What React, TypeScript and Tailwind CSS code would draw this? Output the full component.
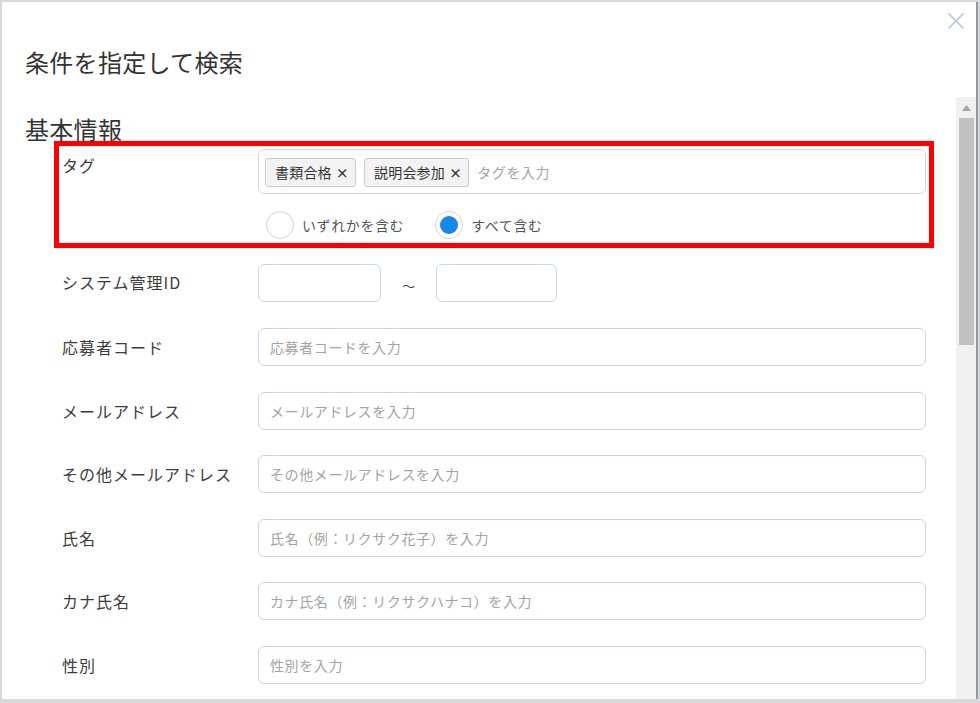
import { useState } from 'react';

type Field = { label: string; placeholder: string };

const fields: Field[] = [
  { label: '応募者コード', placeholder: '応募者コードを入力' },
  { label: 'メールアドレス', placeholder: 'メールアドレスを入力' },
  { label: 'その他メールアドレス', placeholder: 'その他メールアドレスを入力' },
  { label: '氏名', placeholder: '氏名（例：リクサク花子）を入力' },
  { label: 'カナ氏名', placeholder: 'カナ氏名（例：リクサクハナコ）を入力' },
  { label: '性別', placeholder: '性別を入力' },
];

const inputCls =
  'h-[38px] rounded-[6px] border border-[#c9d7e5] bg-white px-[11px] text-[14px] tracking-[0.6px] text-[#333] outline-none placeholder:text-[#a3a3a3]';

const labelCls = 'w-[196px] shrink-0 text-[16px] tracking-[1px] text-[#3c3c3c]';

function Radio({ checked, label, onClick }: { checked: boolean; label: string; onClick: () => void }) {
  return (
    <button type="button" onClick={onClick} className="flex items-center gap-[8px]">
      <span className="flex h-[28px] w-[28px] items-center justify-center rounded-full border border-[#c9d7e5] bg-white">
        {checked && <span className="h-[18px] w-[18px] rounded-full bg-[#1687e6]" />}
      </span>
      <span className="text-[14px] tracking-[0.6px] text-[#555]">{label}</span>
    </button>
  );
}

export default function App() {
  const [tags, setTags] = useState(['書類合格', '説明会参加']);
  const [mode, setMode] = useState<'any' | 'all'>('all');

  return (
    <div
      className="flex h-[703px] w-[980px] bg-[#d9d9d9] pt-[2px] pb-[4px] pl-[2px] pr-[2px]"
      style={{ fontFamily: '"Noto Sans CJK JP", "Noto Sans", sans-serif' }}
    >
      <div className="flex flex-1 flex-col overflow-hidden border-r-2 border-[#8e9c9e] bg-white">
        {/* header */}
        <div className="relative h-[95px] shrink-0">
          <h1 className="pt-[44px] pl-[23px] text-[24px] leading-[32px] tracking-[0.3px] text-[#333]">
            条件を指定して検索
          </h1>
          <button type="button" className="absolute top-[10px] right-[11px]" aria-label="閉じる">
            <svg width="18" height="18" viewBox="0 0 18 18" fill="none">
              <path d="M1.5 1.5 L16.5 16.5 M16.5 1.5 L1.5 16.5" stroke="#b9c8d8" strokeWidth="1.7" />
            </svg>
          </button>
        </div>

        {/* body */}
        <div className="flex min-h-0 flex-1">
          <div className="min-w-0 flex-1 overflow-hidden">
            <h2 className="pt-[18px] pl-[23px] text-[24px] leading-[28px] tracking-[0.3px] text-[#333]">基本情報</h2>

            <div className="mt-[-2px] ml-[52px] w-[880px]">
              {/* tags */}
              <div className="flex border-[5px] border-[#ff0000] px-[3px] pt-[3px] pb-[4px]">
                <div className={`${labelCls} pt-[4px]`}>タグ</div>
                <div className="flex-1">
                  <div className="flex h-[45px] items-center gap-[8px] rounded-[6px] border border-[#d5d5d5] pl-[6px] pt-[1px]">
                    {tags.map((t) => (
                      <span
                        key={t}
                        className="flex h-[29px] items-center gap-[4px] rounded-[3px] border border-[#cbcbcb] bg-[#f3f3f3] pl-[9px] pr-[6px] text-[14px] tracking-[0.2px] text-[#333]"
                      >
                        {t}
                        <button
                          type="button"
                          onClick={() => setTags(tags.filter((x) => x !== t))}
                          className="text-[13px] font-bold leading-none text-[#333]"
                        >
                          ×
                        </button>
                      </span>
                    ))}
                    <input
                      className="min-w-0 flex-1 text-[14px] tracking-[0.6px] outline-none placeholder:text-[#a3a3a3]"
                      placeholder="タグを入力"
                    />
                  </div>
                  <div className="mt-[17px] flex gap-[31px] pl-[8px]">
                    <Radio checked={mode === 'any'} label="いずれかを含む" onClick={() => setMode('any')} />
                    <Radio checked={mode === 'all'} label="すべて含む" onClick={() => setMode('all')} />
                  </div>
                </div>
              </div>

              {/* system id range */}
              <div className="mt-[16px] flex items-center px-[8px]">
                <div className={`${labelCls} pb-[2px]`}>システム管理ID</div>
                <input className={`${inputCls} w-[123px]`} />
                <span className="w-[55px] pt-[6px] text-center text-[13px] text-[#444]">～</span>
                <input className={`${inputCls} w-[121px]`} />
              </div>

              <div className="mt-[26px] flex flex-col gap-[25.6px]">
                {fields.map((f) => (
                  <div key={f.label} className="flex items-center px-[8px]">
                    <div className={labelCls}>{f.label}</div>
                    <input className={`${inputCls} flex-1`} placeholder={f.placeholder} />
                  </div>
                ))}
              </div>
            </div>
          </div>

          {/* scrollbar */}
          <div className="flex w-[20px] shrink-0 flex-col items-center bg-[#f1f1f1] pt-[8px]">
            <svg width="9" height="6" viewBox="0 0 9 6">
              <path d="M4.5 0 L9 6 L0 6 Z" fill="#a3a3a3" />
            </svg>
            <div className="mt-[7px] h-[227px] w-[15px] bg-[#c1c1c1]" />
          </div>
        </div>
      </div>
    </div>
  );
}
